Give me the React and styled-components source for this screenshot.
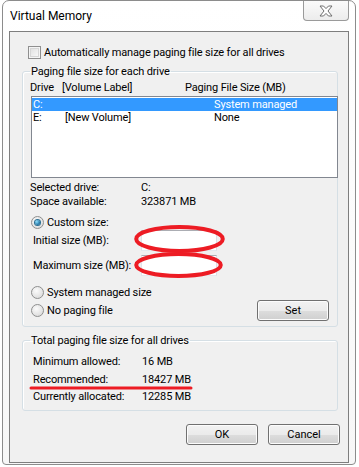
import React from 'react';
import styled, { createGlobalStyle } from 'styled-components';

const GlobalStyle = createGlobalStyle`
  html, body {
    margin: 0;
    padding: 0;
    background: #ffffff;
  }
  body {
    font-family: Roboto, "Liberation Sans", sans-serif;
    font-size: 11px;
    letter-spacing: -0.15px;
    color: #000;
  }
`;

const Window = styled.div`
  box-sizing: border-box;
  margin-left: 2px;
  width: 354px;
  height: 465px;
  border: 1px solid #8c8c8c;
  border-radius: 7px 7px 4px 4px;
  background: linear-gradient(#ffffff, #f7f7f7);
  display: flex;
  flex-direction: column;
  padding: 0 6px 1px 6px;
`;

const TitleBar = styled.div`
  height: 30px;
  display: flex;
  align-items: flex-start;
  justify-content: space-between;
`;

const Title = styled.span`
  margin-top: 7px;
  padding-left: 1px;
  font-size: 12px;
  line-height: 16px;
  letter-spacing: 0;
`;

const CloseButton = styled.div`
  box-sizing: border-box;
  width: 46px;
  height: 20px;
  border: 1px solid #9a9a9a;
  border-top: none;
  border-radius: 0 0 4px 4px;
  background: linear-gradient(#fbfbfb, #ececec);
  display: flex;
  align-items: center;
  justify-content: center;
`;

const Client = styled.div`
  box-sizing: border-box;
  flex: 1;
  border: 1px solid #7e7e7e;
  background: #f0f0f0;
  display: flex;
  flex-direction: column;
  padding: 13px 8px 0 12px;
`;

const CheckRow = styled.label`
  display: flex;
  align-items: center;
  height: 15px;
  padding-left: 6px;
  gap: 3px;
`;

const CheckBox = styled.span`
  box-sizing: border-box;
  width: 13px;
  height: 13px;
  border: 1px solid #8f8f8f;
  background: linear-gradient(135deg, #dcdcdc, #fdfdfd);
  box-shadow: inset 0 0 0 1px #f4f4f4, inset 0 0 0 2px #d6d6d6;
`;

const Group = styled.fieldset`
  box-sizing: border-box;
  width: 316px;
  margin: ${(p) => p.$top}px 0 0 0;
  padding: ${(p) => p.$pad};
  border: 1px solid #d5dfe5;
  border-radius: 3px;
  box-shadow: inset 1px 1px 0 #fff;
  min-width: 0;
`;

const Legend = styled.legend`
  padding: 0 1px;
  line-height: 15px;
`;

const ListHeader = styled.div`
  display: flex;
  height: 15px;
  line-height: 15px;
`;

const HeaderCell = styled.span`
  width: ${(p) => p.$w}px;
  flex: none;
`;

const ListBox = styled.div`
  box-sizing: border-box;
  width: 307px;
  height: 82px;
  margin-left: 1px;
  margin-top: 1px;
  border: 1px solid #828790;
  background: #fff;
  padding-top: 1px;
`;

const ListRow = styled.div`
  display: flex;
  height: 13px;
  line-height: 13px;
  padding-left: 1px;
  background: ${(p) => (p.$selected ? '#3399ff' : 'transparent')};
  color: ${(p) => (p.$selected ? '#fff' : '#000')};
`;

const Cell = styled.span`
  width: ${(p) => p.$w}px;
  flex: none;
`;

const InfoRow = styled.div`
  display: grid;
  grid-template-columns: ${(p) => p.$col}px 1fr;
  height: ${(p) => p.$h}px;
  line-height: ${(p) => p.$h}px;
  padding-left: ${(p) => p.$indent}px;
  margin-top: ${(p) => p.$top || 0}px;
  position: relative;
`;

const RadioRow = styled.div`
  display: flex;
  align-items: center;
  gap: 3px;
  height: ${(p) => p.$h || 14}px;
  padding-left: 1px;
  margin-top: ${(p) => p.$top || 0}px;
`;

const Radio = styled.span`
  box-sizing: border-box;
  width: 13px;
  height: 13px;
  border-radius: 50%;
  border: 1px solid #8e8f8f;
  background: radial-gradient(circle at 40% 35%, #fbfbfb, #d4d4d4);
  display: flex;
  align-items: center;
  justify-content: center;
  &::after {
    content: '';
    display: ${(p) => (p.$checked ? 'block' : 'none')};
    width: 5px;
    height: 5px;
    border-radius: 50%;
    background: radial-gradient(circle at 35% 35%, #8ee0ff, #1a6fa0 70%, #0e4f78);
    box-shadow: 0 0 0 1px #2b6f93;
  }
`;

const SizeRow = styled.div`
  display: grid;
  grid-template-columns: 108px 76px;
  align-items: center;
  height: 21px;
  padding-left: 3px;
  margin-top: ${(p) => p.$top || 0}px;
`;

const InputWrap = styled.div`
  position: relative;
  height: 21px;
`;

const TextInput = styled.div`
  box-sizing: border-box;
  height: 21px;
  border: 1px solid #abadb3;
  border-left-color: #e2e3ea;
  border-right-color: #dbdfe6;
  border-bottom-color: #e3e9ef;
  background: #fff;
`;

const Ellipse = styled.svg`
  position: absolute;
  left: -7px;
  top: ${(p) => p.$top}px;
  overflow: visible;
`;

const BottomRow = styled.div`
  display: flex;
  align-items: center;
  justify-content: space-between;
  height: 21px;
  padding-right: 8px;
  margin-top: 1px;
`;

const Button = styled.div`
  box-sizing: border-box;
  width: ${(p) => p.$w || 72}px;
  height: 21px;
  border: 1px solid #707070;
  border-radius: 3px;
  background: linear-gradient(#f2f2f2 0%, #ebebeb 50%, #dddddd 51%, #cfcfcf 100%);
  box-shadow: inset 0 0 0 1px #fcfcfc;
  display: flex;
  align-items: center;
  justify-content: center;
  line-height: 15px;
  letter-spacing: 0;
`;

const Footer = styled.div`
  display: flex;
  justify-content: flex-end;
  gap: 10px;
  margin-top: 13px;
`;

const Underline = styled.svg`
  position: absolute;
  left: -1px;
  top: 15px;
`;

function CloseGlyph() {
  return (
    <svg width="14" height="12" viewBox="0 0 14 12">
      <polygon
        points="1,1 4.5,1 7,3.6 9.5,1 13,1 9,6 13,11 9.5,11 7,8.4 4.5,11 1,11 5,6"
        fill="#ffffff"
        stroke="#6e6e6e"
        strokeWidth="1"
        strokeLinejoin="round"
      />
    </svg>
  );
}

function RedEllipse({ top, w, h }) {
  return (
    <Ellipse $top={top} width={w} height={h}>
      <ellipse cx={w / 2} cy={h / 2} rx={w / 2 - 2.2} ry={h / 2 - 2} fill="none" stroke="#ed1c24" strokeWidth="4" />
    </Ellipse>
  );
}

export default function App() {
  return (
    <>
      <GlobalStyle />
      <Window>
        <TitleBar>
          <Title>Virtual Memory</Title>
          <CloseButton>
            <CloseGlyph />
          </CloseButton>
        </TitleBar>
        <Client>
          <CheckRow>
            <CheckBox />
            <span>Automatically manage paging file size for all drives</span>
          </CheckRow>

          <Group $top={4} $pad="1px 0 5px 7px">
            <Legend>Paging file size for each drive</Legend>
            <ListHeader>
              <HeaderCell $w={32}>Drive</HeaderCell>
              <HeaderCell $w={123}>[Volume Label]</HeaderCell>
              <span>Paging File Size (MB)</span>
            </ListHeader>
            <ListBox>
              <ListRow $selected>
                <Cell $w={181}>C:</Cell>
                <span>System managed</span>
              </ListRow>
              <ListRow>
                <Cell $w={32}>E:</Cell>
                <Cell $w={149}>[New Volume]</Cell>
                <span>None</span>
              </ListRow>
            </ListBox>

            <InfoRow $col={111} $h={14} $indent={0} $top={3}>
              <span>Selected drive:</span>
              <span>C:</span>
            </InfoRow>
            <InfoRow $col={111} $h={14} $indent={0}>
              <span>Space available:</span>
              <span>323871 MB</span>
            </InfoRow>

            <RadioRow $top={7} $h={13}>
              <Radio $checked />
              <span>Custom size:</span>
            </RadioRow>
            <SizeRow $top={1}>
              <span>Initial size (MB):</span>
              <InputWrap>
                <TextInput />
                <RedEllipse top={-5} w={91} h={28} />
              </InputWrap>
            </SizeRow>
            <SizeRow $top={4}>
              <span>Maximum size (MB):</span>
              <InputWrap>
                <TextInput />
                <RedEllipse top={-3} w={89} h={26} />
              </InputWrap>
            </SizeRow>

            <RadioRow $top={9}>
              <Radio />
              <span>System managed size</span>
            </RadioRow>
            <BottomRow>
              <RadioRow>
                <Radio />
                <span>No paging file</span>
              </RadioRow>
              <Button>Set</Button>
            </BottomRow>
          </Group>

          <Group $top={6} $pad="5px 0 4px 7px">
            <Legend>Total paging file size for all drives</Legend>
            <InfoRow $col={109} $h={17.5} $indent={3}>
              <span>Minimum allowed:</span>
              <span>16 MB</span>
            </InfoRow>
            <InfoRow $col={109} $h={17.5} $indent={3}>
              <span>Recommended:</span>
              <span>18427 MB</span>
              <Underline width="164" height="4">
                <line x1="2" y1="2" x2="162" y2="2" stroke="#ed1c24" strokeWidth="3" strokeLinecap="round" />
              </Underline>
            </InfoRow>
            <InfoRow $col={109} $h={17.5} $indent={3}>
              <span>Currently allocated:</span>
              <span>12285 MB</span>
            </InfoRow>
          </Group>

          <Footer>
            <Button>OK</Button>
            <Button>Cancel</Button>
          </Footer>
        </Client>
      </Window>
    </>
  );
}
